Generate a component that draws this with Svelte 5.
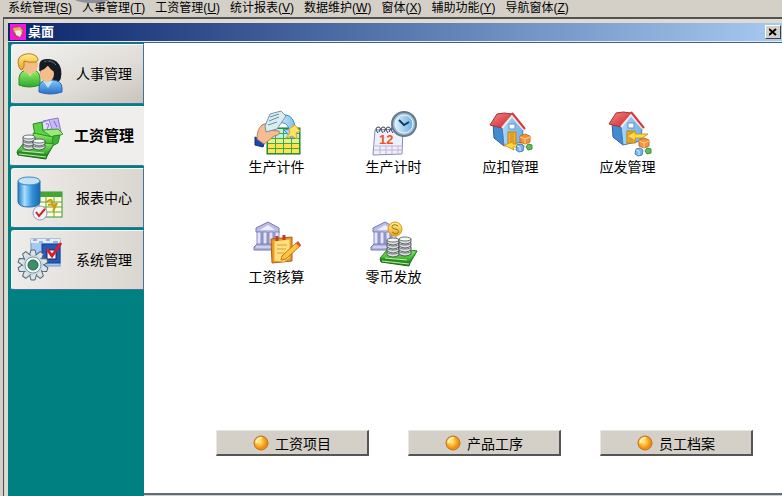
<script>
    const menus = [
        { text: '系统管理', key: 'S' },
        { text: '人事管理', key: 'T' },
        { text: '工资管理', key: 'U' },
        { text: '统计报表', key: 'V' },
        { text: '数据维护', key: 'W' },
        { text: '窗体', key: 'X' },
        { text: '辅助功能', key: 'Y' },
        { text: '导航窗体', key: 'Z' }
    ]

    const sections = [
        { text: '人事管理', icon: people },
        { text: '工资管理', icon: moneyBox },
        { text: '报表中心', icon: reports },
        { text: '系统管理', icon: settings }
    ]

    const shortcuts = [
        { text: '生产计件', icon: piecework },
        { text: '生产计时', icon: timework },
        { text: '应扣管理', icon: deductions },
        { text: '应发管理', icon: payments },
        { text: '工资核算', icon: payroll },
        { text: '零币发放', icon: cash }
    ]

    const actions = ['工资项目', '产品工序', '员工档案']

    let active = $state(1)
    let open = $state(true)
</script>

{#snippet people()}
    <path d="M3 35V28Q4 20 12 20H17Q24 21 24 29V35Q13 39 3 35Z" fill="url(#green)" stroke="#278b25" />
    <path d="M10 20L14 27L18 20Z" fill="#b9ef9b" />
    <ellipse cx="14" cy="15" rx="8" ry="9" fill="#f3bd83" />
    <path d="M3 17Q0 7 7 5Q14 2 20 6Q24 10 20 12Q13 13 8 11Q9 17 6 20Q4 20 3 17Z" fill="url(#gold)" stroke="#bc7b16" />
    <path d="M24 20Q21 9 31 9Q42 8 45 19Q47 31 40 33H29Q24 27 24 20Z" fill="#151a24" />
    <path d="M28 12Q35 9 40 15" fill="none" stroke="#67758a" />
    <path d="M23 42V37Q24 30 32 30H37Q46 31 46 38V42Q34 46 23 42Z" fill="url(#blue)" stroke="#2769b4" />
    <path d="M27 31L32 38L37 31Z" fill="#bee4ff" />
    <ellipse cx="31" cy="24" rx="7" ry="8" fill="#f4bd8b" />
    <path d="M23 21Q29 20 32 15Q34 20 39 22V15L31 11L24 15Z" fill="#151a24" />
{/snippet}

{#snippet cashStack()}
    <path d="M1 40L9 30L38 32L31 44L30 47L2 43Z" fill="#288a25" stroke="#17651b" />
    <path d="M1 39L10 29L38 32L31 42Z" fill="url(#green)" stroke="#2b9a23" />
    <path d="M3 42L30 45M6 39L28 41" fill="none" stroke="#bff0a2" />
{/snippet}

{#snippet coins(x, y, n)}
    {#each Array(n) as _, i}
        <path d="M{x} {y + (n - 1 - i) * 4}v3q6 4 12 0v-3z" fill="#dce2e2" stroke="#3b4144" stroke-width=".8" />
        <ellipse cx={x + 6} cy={y + (n - 1 - i) * 4} rx="6" ry="2" fill="#f6f9f8" stroke="#4b5154" stroke-width=".8" />
    {/each}
{/snippet}

{#snippet moneyBox()}
    <path d="M27 9L42 6L45 20L29 23Z" fill="#c8b8fa" stroke="#8779cf" />
    <path d="M25 11L33 8L37 20L28 22Z" fill="#e3dcff" stroke="#9182d7" />
    <path d="M30 12q4-1 2 3t3 2M38 9l3 6" fill="none" stroke="#7768cc" />
    <path d="M17 12L26 10L27 19L38 22L37 31L20 29Z" fill="#5fd048" stroke="#268c22" />
    <path d="M26 18L42 17L47 22L37 26Z" fill="#9bea78" stroke="#389c2a" />
    <path d="M37 24L44 23L42 31L36 34Z" fill="#3cb734" stroke="#278b25" />
    <path d="M17 21L37 25L36 34L19 31Z" fill="url(#green)" stroke="#2a9425" />
    {@render cashStack()}
    {@render coins(7, 25, 3)}
    {@render coins(17, 29, 2)}
{/snippet}

{#snippet sheet(x, y, w, h)}
    <rect {x} {y} width={w} height={h} fill="#fdffdf" stroke="#3b9438" />
    <rect {x} {y} width={w} height="5" fill="#40a735" />
    <path d="M{x} {y + 10}h{w}M{x} {y + 15}h{w}M{x} {y + 20}h{w}M{x + 7} {y}v{h}M{x + 15} {y}v{h}" fill="none" stroke="#66a13c" />
{/snippet}

{#snippet reports()}
    {@render sheet(23, 18, 23, 25)}
    <path d="M31 28q5-5 5 1t5 0l-4 8m-5-6l5-1" fill="none" stroke="#d39900" stroke-width="2" />
    <path d="M2 7V28Q3 33 13 33Q23 33 24 28V7Z" fill="url(#cylinder)" stroke="#226eb1" />
    <ellipse cx="13" cy="7" rx="11" ry="4" fill="#bfe4fa" stroke="#4088bd" />
    <circle cx="24" cy="39" r="7" fill="#f5f2fc" stroke="#9c96b7" />
    <path d="M20 38l3 4 6-7" fill="none" stroke="#c92620" stroke-width="2" />
{/snippet}

{#snippet settings()}
    <rect x="15" y="3" width="29" height="27" fill="#a8c9f3" stroke="#7396cb" />
    <path d="M15 5H44" stroke="#e4edf8" stroke-width="4" />
    <path d="M17 4h4m2 2h4m3-2h4m3 2h5" stroke="#5177bd" />
    <rect x="26" y="8" width="18" height="19" fill="#265bb5" stroke="#173e91" />
    <rect x="31" y="14" width="9" height="9" fill="#fff" stroke="#0c2868" />
    <path d="M31 13l5 7 9-13" fill="none" stroke="#e21b27" stroke-width="3" />
    {#each [0, 36, 72, 108, 144, 180, 216, 252, 288, 324] as angle}
        <path d="M15 14h4l2 7h-8z" fill="#d9e5ea" stroke="#53666f" transform="rotate({angle} 17 29)" />
    {/each}
    <circle cx="17" cy="29" r="10" fill="#c8d8df" />
    <circle cx="17" cy="29" r="8" fill="#edf5f7" stroke="#8499a3" />
    <circle cx="17" cy="29" r="5" fill="#3b9164" stroke="#2d5f50" />
{/snippet}

{#snippet piecework()}
    <rect x="14" y="19" width="33" height="26" fill="#42a843" stroke="#12782b" />
    {#each [0, 1, 2, 3, 4] as row}
        {#each [0, 1, 2, 3] as col}
            <rect x={15 + col * 8} y={20 + row * 5} width="7" height="4" fill={row < 2 ? '#b8eff1' : row === 2 ? '#e8ef89' : '#ffe250'} />
        {/each}
    {/each}
    <path d="M2 28l10 4-2 6-8-2z" fill="#1748b5" stroke="#143078" />
    <path d="M4 30Q4 20 9 16L19 12l4 5-9 4 12 1q2 4-5 5l-6 5-4 3z" fill="#f5bd91" stroke="#bb7b58" />
    <path d="M25 14Q24 5 33 6Q41 7 42 19l4 1-7 10-8-9 5-1Q34 12 25 14Z" fill="url(#sky)" stroke="#318cc2" />
    <path d="M12 17L17 5L28 2L33 7L24 20L13 23Z" fill="#d9edf1" stroke="#7494aa" />
    <path d="M17 8l9-3m-10 7l10-4m-11 8l9-3" stroke="#668ba7" />
    <path d="M36 20l6-4 5 6-4 2 1 6-5-3-6 2 4-5z" fill="#ffe261" stroke="#dea52b" />
{/snippet}

{#snippet timework()}
    <path d="M5 21L33 20L32 45L3 46Z" fill="#eef0ff" stroke="#888eb4" />
    <path d="M5 37H32M4 41H32M10 37v8m6-8v8m6-8v8m6-8v8" stroke="#c5b2d4" />
    {#each [0, 1, 2, 3] as i}
        <path d="M{8 + i * 5} 24q-4-5 0-6q4 0 1 5" fill="none" stroke="#333948" />
    {/each}
    <text x="9" y="35" class="date">12</text>
    <circle cx="34" cy="15" r="12" fill="#a8bccb" stroke="#60798e" stroke-width="2" />
    <circle cx="34" cy="15" r="9" fill="url(#sky)" stroke="#edf8ff" />
    <path d="M29 11l5 5 5-3" fill="none" stroke="#173c59" stroke-width="2" />
{/snippet}

{#snippet house()}
    <path d="M6 14L15 17L17 37L7 29Z" fill="#438bd0" stroke="#315e9e" />
    <path d="M15 17L25 7L36 20L35 33L17 37Z" fill="url(#wall)" stroke="#447fb6" />
    <rect x="21" y="23" width="8" height="12" fill="#eeb331" stroke="#bd7e19" />
    <path d="M24 24v10M26 24v10" stroke="#cd8c1c" />
    <path d="M3 16L10 5Q17 3 25 5L15 19Z" fill="url(#red)" stroke="#a93036" />
    <path d="M15 19L25 7L37 21" fill="none" stroke="#f4e6e5" stroke-width="2" />
    <path d="M25 4L38 20" stroke="#d8363c" stroke-width="2" />
    <rect x="22" y="15" width="6" height="5" fill="#fff" stroke="#6094bd" />
{/snippet}

{#snippet blocks(x, y)}
    <g transform="translate({x} {y})">
        <path d="M4 2l5-2 5 2v6l-5 2-5-2z" fill="#ef963d" stroke="#ca6c20" />
        <path d="M4 3l5 2 5-2M9 5v5" fill="none" stroke="#ffd18c" />
        <path d="M1 11l4-1 3 2-1 5-4 1-3-2z" fill="#78b5ec" stroke="#4b82bb" />
        <path d="M12 10l4 1v4l-4 1-2-3z" fill="#65ba60" stroke="#36903c" />
        <path d="M1 12l3 1v4" fill="none" stroke="#d6efff" />
    </g>
{/snippet}

{#snippet deductions()}
    {@render house()}
    <path d="M17 36l9-3v2h9l2 3H26l1 3z" fill="#ffd64a" stroke="#d89c1a" />
    {@render blocks(29, 25)}
{/snippet}

{#snippet payments()}
    <g transform="translate(2 -1)">{@render house()}</g>
    <path d="M23 27l9-5-1 3h13l-6 4h-7l1 3z" fill="#ffdc45" stroke="#cc9d26" />
    {@render blocks(31, 29)}
{/snippet}

{#snippet bank()}
    <path d="M3 13V9L15 3L26 9V14Z" fill="#bbbde7" stroke="#7679ad" />
    <path d="M7 11L15 6L22 11Z" fill="#eeeeff" />
    <path d="M4 13H25V27H4Z" fill="#9b9fd0" />
    {#each [4, 10, 16, 22] as x}
        <rect {x} y="13" width="4" height="14" fill="#e4e4ff" stroke="#888cbd" />
    {/each}
    <path d="M4 25H25L28 28V31H1V28Z" fill="#aeb2dc" stroke="#747bad" />
    <path d="M3 28H27" stroke="#edf0ff" />
{/snippet}

{#snippet payroll()}
    {@render bank()}
    <path d="M18 20L39 18V42L19 44Z" fill="#e9951e" stroke="#b55c17" />
    <path d="M21 22L37 20V39L31 43L21 42Z" fill="#ffe07a" stroke="#e1a33d" />
    <path d="M24 17v5m7-6v5" stroke="#bd3d29" stroke-width="3" />
    <path d="M24 26h10m-10 4h9m-9 4h7" stroke="#d49a3a" />
    <path d="M29 37L43 24l4 3-14 13-5 1z" fill="#ffc63b" stroke="#c36f1f" />
    <path d="M43 24l2-2 3 4-1 2z" fill="#dc4b36" />
{/snippet}

{#snippet cash()}
    {@render bank()}
    <g transform="translate(9 0)">{@render cashStack()}</g>
    {@render coins(17, 21, 4)}
    {@render coins(29, 20, 4)}
    <circle cx="25" cy="10" r="7" fill="url(#gold)" stroke="#d69a13" />
    <path d="M28 7q-3-2-5-1-3 3 2 4 5 1 3 4-3 2-6-1" fill="none" stroke="#9e7614" />
{/snippet}

<svg class="defs" aria-hidden="true">
    <defs>
        <linearGradient id="green" x2="0" y2="1"><stop stop-color="#9cf16d" /><stop offset="1" stop-color="#2ca82c" /></linearGradient>
        <linearGradient id="gold" x2="0" y2="1"><stop stop-color="#fff08d" /><stop offset="1" stop-color="#e7a423" /></linearGradient>
        <linearGradient id="blue" x2="0" y2="1"><stop stop-color="#86c8fa" /><stop offset="1" stop-color="#286fc8" /></linearGradient>
        <linearGradient id="sky"><stop stop-color="#d7f3ff" /><stop offset="1" stop-color="#6daee5" /></linearGradient>
        <linearGradient id="wall"><stop stop-color="#a9d8fb" /><stop offset="1" stop-color="#6fb1ea" /></linearGradient>
        <linearGradient id="red" x2="1" y2="1"><stop stop-color="#f98a84" /><stop offset="1" stop-color="#c4202a" /></linearGradient>
        <linearGradient id="cylinder"><stop stop-color="#2377bd" /><stop offset=".3" stop-color="#a6e0ff" /><stop offset=".65" stop-color="#3390dc" /><stop offset="1" stop-color="#1e66a9" /></linearGradient>
        <radialGradient id="ball" cx=".4" cy=".4"><stop stop-color="#fff2a0" /><stop offset=".5" stop-color="#ffbd34" /><stop offset="1" stop-color="#f08c14" /></radialGradient>
    </defs>
</svg>

<div class="app">
    <nav class="menubar">
        {#each menus as menu}
            <button>{menu.text}(<u>{menu.key}</u>)</button>
        {/each}
        <span class="bump"></span>
    </nav>

    {#if open}
        <section class="window">
            <header>
                <svg class="logo" viewBox="0 0 16 16" aria-hidden="true">
                    <rect width="16" height="16" fill="#f516e6" />
                    <path d="M2 4l4-2 8 2-1 8-7 2-3-4z" fill="#b7475c" />
                    <path d="M3 4l7-1 3 4-5 3-4-2z" fill="#e8ad65" />
                    <path d="M5 7l5-1 2 3-2 4-4-2z" fill="#eee7df" />
                </svg>
                <h1>桌面</h1>
                <button class="close" aria-label="关闭" onclick={() => (open = false)}>
                    <svg viewBox="0 0 8 8" aria-hidden="true"><path d="M0 1l7 6M7 1L0 7" stroke="#000" stroke-width="2" /></svg>
                </button>
            </header>

            <div class="body">
                <aside>
                    {#each sections as section, i}
                        <button class="section" class:active={i === active} onclick={() => (active = i)}>
                            <svg class="icon" viewBox="0 0 48 48" aria-hidden="true">{@render section.icon()}</svg>
                            <span>{section.text}</span>
                        </button>
                    {/each}
                </aside>

                <main>
                    <div class="shortcuts">
                        {#each shortcuts as item}
                            <button class="shortcut">
                                <svg class="icon" viewBox="0 0 48 48" aria-hidden="true">{@render item.icon()}</svg>
                                <span>{item.text}</span>
                            </button>
                        {/each}
                    </div>
                    <footer>
                        {#each actions as action}
                            <button class="action">
                                <svg viewBox="0 0 16 16" aria-hidden="true">
                                    <circle cx="8" cy="8" r="7" fill="url(#ball)" stroke="#bd7421" />
                                    <path d="M3 8q1-5 6-5" fill="none" stroke="#fff4b8" stroke-width="2" />
                                </svg>
                                {action}
                            </button>
                        {/each}
                    </footer>
                </main>
            </div>
        </section>
    {/if}
</div>

<style>
    :global(body) {
        margin: 0;
        background: #d4d0c8;
    }
    .app {
        display: flex;
        flex-direction: column;
        min-height: 100vh;
        box-sizing: border-box;
        padding-left: 3px;
        font-family: 'Liberation Sans', 'Noto Sans CJK SC', sans-serif;
        font-size: 14px;
        color: #000;
    }
    button {
        font: inherit;
        color: inherit;
        background: none;
        border: none;
        padding: 0;
        cursor: default;
        white-space: nowrap;
    }
    .defs {
        position: absolute;
        width: 0;
        height: 0;
    }
    .menubar {
        position: relative;
        display: flex;
        gap: 10px;
        height: 17px;
        padding-left: 5px;
        overflow: hidden;
        font-size: 12px;
        line-height: 16px;
    }
    .menubar button {
        height: 16px;
    }
    .bump {
        position: absolute;
        top: -13px;
        left: 67px;
        width: 44px;
        height: 16px;
        border-radius: 50%;
        background: #8b909b;
    }
    .window {
        flex: 1;
        display: flex;
        flex-direction: column;
        border-top: 2px solid #55524e;
        border-left: 1px solid #55524e;
    }
    header {
        display: flex;
        align-items: center;
        height: 18px;
        padding: 0 1px 0 2px;
        margin-left: 4px;
        border-top: 4px solid #dedbd4;
        border-bottom: 1px solid #e8eef5;
        background: linear-gradient(to right, #0a246a, #a6caf0) padding-box;
    }
    .logo {
        width: 16px;
        height: 16px;
    }
    h1 {
        flex: 1;
        margin: 0 0 0 2px;
        font-size: 13px;
        line-height: 18px;
        color: #fff;
    }
    .close {
        display: flex;
        align-items: center;
        justify-content: center;
        width: 16px;
        height: 14px;
        background: #d4d0c8;
        border: 1px solid;
        border-color: #fff #404040 #404040 #fff;
    }
    .close svg {
        width: 8px;
        height: 8px;
    }
    .body {
        flex: 1;
        display: flex;
        margin-left: 1px;
        border-left: 3px solid #dedbd4;
    }
    aside {
        display: flex;
        flex-direction: column;
        gap: 2px;
        width: 136px;
        box-sizing: border-box;
        padding: 1px 0 0 3px;
        background: #008080;
        border-top: 1px solid #315c86;
    }
    .section {
        display: flex;
        align-items: center;
        gap: 12px;
        height: 60px;
        padding-left: 4px;
        border: 1px solid #3e739b;
        border-top-color: #f7f7f7;
        border-left-color: #f7f7f7;
        border-radius: 3px 0 0 3px;
        background: linear-gradient(to right, #eeecea, #dad6cf);
    }
    .section span {
        padding-bottom: 3px;
    }
    .section:nth-child(1) {
        background: linear-gradient(to bottom right, #f3f2f0, #e0ddd8 60%, #c8c4bb);
    }
    .section.active {
        margin-left: -1px;
        padding-left: 5px;
        gap: 10px;
        border-right-color: #efeeec;
        background: #efeeec;
        font-size: 15px;
        font-weight: bold;
    }
    .icon {
        flex: none;
        width: 48px;
        height: 48px;
    }
    main {
        flex: 1;
        display: flex;
        flex-direction: column;
        justify-content: space-between;
        background: #fff;
        border-top: 1px solid #3c5f9b;
        border-bottom: 2px solid #5c6d7c;
        margin-bottom: 1px;
    }
    .shortcuts {
        display: grid;
        grid-template-columns: repeat(4, 117px);
        row-gap: 40px;
        padding: 66px 0 0 74px;
    }
    .shortcut {
        display: flex;
        flex-direction: column;
        align-items: center;
        height: 70px;
    }
    .shortcut span {
        line-height: 20px;
    }
    .date {
        font: bold 13px 'Liberation Sans', sans-serif;
        fill: #ec5518;
    }
    footer {
        display: flex;
        justify-content: space-between;
        gap: 16px;
        padding: 0 29px 37px 72px;
    }
    .action {
        display: flex;
        align-items: center;
        justify-content: center;
        gap: 6px;
        width: 153px;
        height: 26px;
        background: #d4d0c8;
        border: solid;
        border-width: 1px 2px 2px 1px;
        border-color: #e8e6e1 #555 #555 #e8e6e1;
    }
    .action svg {
        width: 16px;
        height: 16px;
    }
</style>
